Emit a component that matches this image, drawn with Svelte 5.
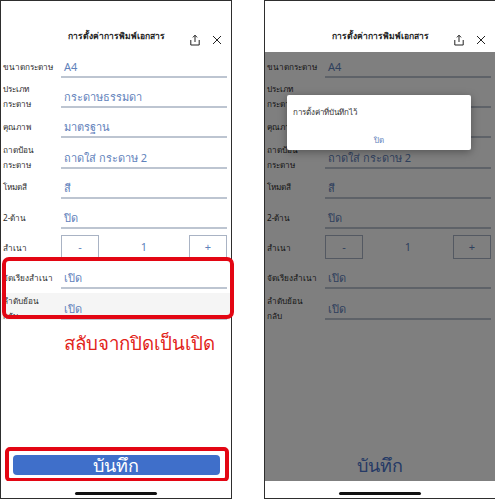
<script>
  const rows = [
    { label: ['ขนาดกระดาษ'], value: 'A4' },
    { label: ['ประเภท', 'กระดาษ'], value: 'กระดาษธรรมดา', covered: true },
    { label: ['คุณภาพ'], value: 'มาตรฐาน' },
    { label: ['ถาดป้อน', 'กระดาษ'], value: 'ถาดใส่ กระดาษ 2' },
    { label: ['โหมดสี'], value: 'สี' },
    { label: ['2-ด้าน'], value: 'ปิด' },
    { label: ['สำเนา'], stepper: true },
    { label: ['จัดเรียงสำเนา'], value: 'เปิด' },
    { label: ['ลำดับย้อน', 'กลับ'], value: 'เปิด', last: true }
  ];
</script>

{#snippet phone(saved)}
  <section class="phone" class:saved>
    <header class="head">
      <h1>การตั้งค่าการพิมพ์เอกสาร</h1>
      <svg class="ico share" viewBox="0 0 12 12" width="12" height="12" aria-hidden="true">
        <path d="M6 8V1.4M3.9 3.4 6 1.2l2.1 2.2M1.8 6v5h8.4V6" fill="none" stroke="#222" stroke-width="1"/>
      </svg>
      <svg class="ico close" viewBox="0 0 12 12" width="12" height="12" aria-hidden="true">
        <path d="M2 2l8 8M10 2l-8 8" fill="none" stroke="#222" stroke-width="1"/>
      </svg>
    </header>
    <div class="form">
      {#each rows as r}
        <div class="row" class:last={r.last && !saved}>
          <span class="label">{#each r.label as line}<span class="line">{line}</span>{/each}</span>
          {#if r.stepper}
            <div class="stepper">
              <span class="btn">-</span>
              <span class="num">1</span>
              <span class="btn">+</span>
            </div>
          {:else}
            <span class="field"><span class:covered={r.covered && saved}>{r.value}</span></span>
          {/if}
        </div>
      {/each}
    </div>
    <div class="note">
      {#if !saved}<p>สลับจากปิดเป็นเปิด</p>{/if}
    </div>
    <div class="save"><span class="savebtn">บันทึก</span></div>
    <div class="homebar"><i></i></div>

    {#if saved}
      <div class="dim"></div>
      <div class="dialog">
        <p>การตั้งค่าที่บันทึกไว้</p>
        <span>ปิด</span>
      </div>
    {:else}
      <div class="mark mark-rows"></div>
      <div class="mark mark-save"></div>
    {/if}
  </section>
{/snippet}

<main class="page">
  {@render phone(false)}
  {@render phone(true)}
</main>

<style>
  :global(body) { margin: 0; background: #fff; }
  .page {
    display: flex;
    gap: 32px;
    width: 495px;
    height: 500px;
    overflow: hidden;
    font-family: "Noto Sans", "Liberation Sans", sans-serif;
  }
  .phone {
    position: relative;
    flex: none;
    box-sizing: border-box;
    width: 232px;
    height: 499px;
    border: 1px solid #2e2e2e;
    display: flex;
    flex-direction: column;
    background: #fff;
  }
  .head {
    position: relative;
    flex: none;
    height: 50px;
  }
  .head h1 {
    margin: 0;
    position: absolute;
    top: 28px;
    left: 0;
    width: 230px;
    text-align: center;
    font-size: 8.5px;
    line-height: 14px;
    font-weight: 700;
    color: #222;
  }
  .ico { position: absolute; }
  .share { left: 188px; top: 33px; }
  .close { left: 210px; top: 33px; }
  .form {
    flex: none;
    height: 269px;
    overflow: hidden;
  }
  .row {
    display: grid;
    grid-template-columns: 55px 166px;
    gap: 3px;
    align-items: center;
    height: 30.2px;
    padding-left: 2px;
  }
  .row.last { background: #f5f5f5; margin-right: 1px; }
  .row.last .field { background: transparent; }
  .label {
    font-size: 8.2px;
    line-height: 15px;
    color: #2b2b2b;
  }
  .line { display: block; white-space: nowrap; }
  .covered { visibility: hidden; }
  .field {
    box-sizing: border-box;
    height: 24px;
    padding-left: 3px;
    background: #fff;
    border-bottom: 2px solid #bdc5d1;
    font-size: 11px;
    line-height: 25px;
    color: #5f82bb;
  }
  .stepper {
    display: grid;
    grid-template-columns: 38px 1fr 38px;
    height: 24px;
    text-align: center;
    font-size: 11px;
    line-height: 24px;
    color: #5f82bb;
  }
  .btn {
    box-sizing: border-box;
    border: 1px solid #a9b3c4;
    line-height: 22px;
  }
  .note {
    flex: 1;
    min-height: 0;
  }
  .note p {
    margin: 8px 0 0 63px;
    font-size: 18.7px;
    line-height: 30px;
    color: #e2231a;
  }
  .save {
    flex: none;
    display: flex;
    justify-content: center;
    height: 32px;
    align-items: center;
  }
  .savebtn {
    box-sizing: border-box;
    width: 207px;
    height: 20px;
    border-radius: 4px;
    background: #3f6fca;
    color: #fff;
    text-align: center;
    font-size: 18px;
    line-height: 20px;
  }
  .saved .savebtn { background: none; color: #4a74cc; }
  .homebar {
    flex: none;
    box-sizing: border-box;
    height: 17px;
    padding-bottom: 3px;
    display: flex;
    justify-content: center;
    align-items: flex-end;
    background: #fff;
    position: relative;
    z-index: 2;
  }
  .homebar i {
    width: 82px;
    height: 3px;
    border-radius: 2px;
    background: #111;
  }
  .dim {
    position: absolute;
    left: 0;
    right: 0;
    top: 51px;
    bottom: 17px;
    background: rgba(0, 0, 0, 0.5);
  }
  .dialog {
    position: absolute;
    left: 22px;
    top: 94px;
    box-sizing: border-box;
    width: 184px;
    height: 55px;
    padding: 10px 6px 0;
    background: #fff;
    border-radius: 2px;
    box-shadow: 0 2px 8px rgba(0, 0, 0, 0.35);
    font-size: 8px;
    line-height: 13px;
    color: #333;
  }
  .dialog p { margin: 0; }
  .dialog span {
    display: block;
    margin-top: 15px;
    text-align: center;
    color: #5f82bb;
  }
  .mark {
    position: absolute;
    box-sizing: border-box;
    border: 4px solid #e30613;
    border-radius: 7px;
  }
  .mark-rows { left: 1px; top: 256px; width: 232px; height: 62px; }
  .mark-save { left: 4px; top: 446px; width: 224px; height: 35px; border-radius: 5px; }
</style>
